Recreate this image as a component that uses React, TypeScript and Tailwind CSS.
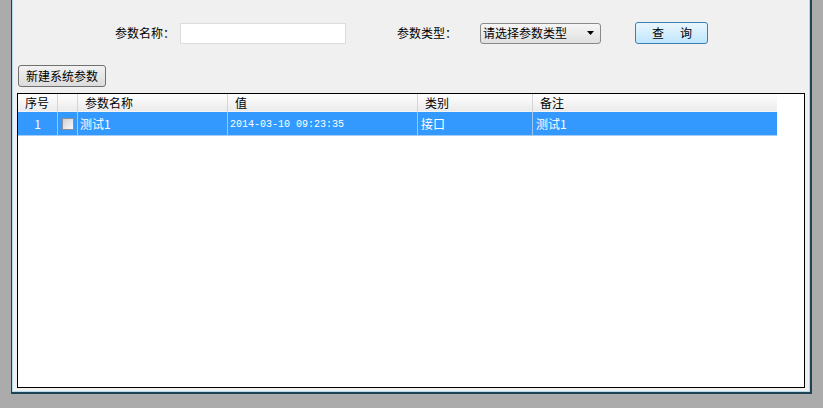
import React from "react";

const font = "font-['SimSun','Noto_Sans_CJK_SC',sans-serif]";

const columns = ["序号", "", "参数名称", "值", "类别", "备注"];

const rows = [
  { no: "1", name: "测试1", value: "2014-03-10 09:23:35", type: "接口", remark: "测试1" },
];

const gridCols = "grid grid-cols-[40px_20px_150px_190px_115px_244px] w-[759px]";

const App = () => {
  return (
    <div className={`w-[823px] h-[408px] bg-[#ababab] overflow-hidden text-[12px] text-black ${font}`}>
      <div className="ml-[11px] w-[801px] h-[394px] border-l border-r-2 border-b-2 border-[#1d4456]">
        <div className="h-full pt-[22px] border-x border-b border-[#b4d8ea] bg-[#f0f0f0]">
          {/* search bar */}
          <div className="flex items-center h-[22px] pl-[102px] whitespace-nowrap">
            <span className="w-[53px]">参数名称：</span>
            <input
              className="ml-[12px] w-[166px] h-[21px] bg-white border border-[#dcdcdc] outline-none"
              type="text"
            />
            <span className="ml-[51px] w-[55px]">参数类型：</span>
            <div className="ml-[28px] w-[121px] h-[21px] flex items-center justify-between pl-[2px] pr-[6px] rounded-[3px] border border-[#8a8a8a] bg-gradient-to-b from-[#f6f6f6] to-[#e0e0e0]">
              <span>请选择参数类型</span>
              <svg width="7" height="4" viewBox="0 0 7 4">
                <path d="M0 0h7L3.5 4z" fill="#000" />
              </svg>
            </div>
            <button className="ml-[34px] w-[73px] h-[22px] rounded-[3px] border border-[#3c7fb1] bg-gradient-to-b from-[#eaf6fd] to-[#bee6fd] text-[12px] tracking-[16px] pl-[16px]">
              查询
            </button>
          </div>

          <button className="block mt-[21px] ml-[5px] w-[88px] h-[22px] rounded-[3px] border border-[#707070] bg-gradient-to-b from-[#f2f2f2] to-[#dcdcdc] whitespace-nowrap">
            新建系统参数
          </button>

          {/* parameter grid */}
          <div className="mt-[6px] ml-[4px] w-[788px] h-[295px] border border-black bg-white">
            <div className={`${gridCols} h-[18px] bg-gradient-to-b from-white to-[#ebebeb] border-b border-[#f4f4f4]`}>
              {columns.map((c, i) => (
                <div key={i} className={`${i < 5 ? "border-r" : ""} border-[#d5d5d5] pl-[7px] leading-[18px]`}>
                  {c}
                </div>
              ))}
            </div>
            {rows.map((r) => (
              <div key={r.no} className={`${gridCols} h-[24px] bg-[#3399ff] text-white border-b border-[#a6cdf3]`}>
                <div className="border-r border-[#9ec8f2] text-center leading-[23px]">{r.no}</div>
                <div className="border-r border-[#9ec8f2] flex items-center pl-[4px]">
                  <span className="w-[12px] h-[12px] border border-[#8f8f8f] bg-gradient-to-br from-[#d0d0d0] to-[#fafafa]" />
                </div>
                <div className="border-r border-[#9ec8f2] pl-[2px] leading-[23px]">{r.name}</div>
                <div className="border-r border-[#9ec8f2] pl-[2px] pt-[2px] flex items-center font-['Liberation_Mono',monospace] text-[10px]">
                  {r.value}
                </div>
                <div className="border-r border-[#9ec8f2] pl-[3px] leading-[23px]">{r.type}</div>
                <div className="pl-[3px] leading-[23px]">{r.remark}</div>
              </div>
            ))}
          </div>
        </div>
      </div>
    </div>
  );
};

export default App;
